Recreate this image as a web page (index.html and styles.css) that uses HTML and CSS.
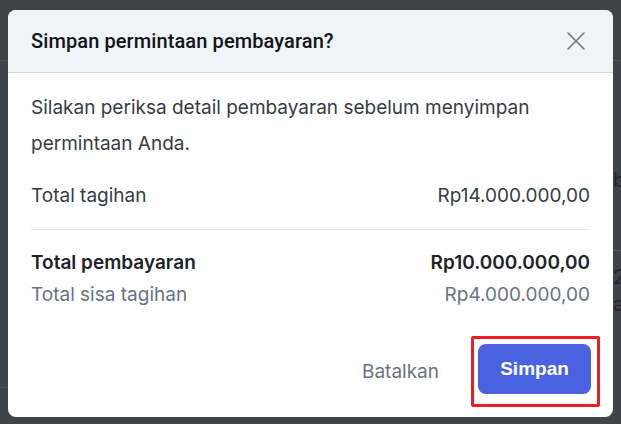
FILE: index.html
```html
<!DOCTYPE html>
<html lang="id">
<head>
<meta charset="utf-8">
<title>Simpan permintaan pembayaran</title>
<link rel="stylesheet" href="styles.css">
</head>
<body>
<div class="backdrop" aria-hidden="true">
  <div class="bg-line bg-line-1"></div>
  <div class="bg-line bg-line-2"></div>
  <div class="bg-line bg-line-3"></div>
  <div class="bg-glyph bg-b"></div>
  <div class="bg-glyph bg-2"></div>
  <div class="bg-glyph bg-a"></div>
</div>
<div class="dialog">
  <div class="dialog-header">
    <h2 class="dialog-title">Simpan permintaan pembayaran?</h2>
    <button class="close-btn" aria-label="Tutup">
      <svg width="18" height="18" viewBox="0 0 18 18" fill="none" stroke="#6b7280" stroke-width="1.6" stroke-linecap="round">
        <path d="M1 1L17 17M17 1L1 17"/>
      </svg>
    </button>
  </div>
  <div class="dialog-body">
    <p class="intro">Silakan periksa detail pembayaran sebelum menyimpan permintaan Anda.</p>
    <div class="row row-bill">
      <span>Total tagihan</span>
      <span>Rp14.000.000,00</span>
    </div>
    <div class="divider"></div>
    <div class="row row-strong">
      <span>Total pembayaran</span>
      <span>Rp10.000.000,00</span>
    </div>
    <div class="row row-muted">
      <span>Total sisa tagihan</span>
      <span>Rp4.000.000,00</span>
    </div>
  </div>
  <div class="dialog-footer">
    <button class="btn-cancel">Batalkan</button>
    <div class="highlight">
      <button class="btn-save">Simpan</button>
    </div>
  </div>
</div>
</body>
</html>
```

FILE: styles.css
```css
html, body {
  margin: 0;
  padding: 0;
}
body {
  background: #40434a;
  width: 621px;
  height: 424px;
  overflow: hidden;
  font-family: Inter, "Noto Sans", sans-serif;
}
.backdrop {
  position: absolute;
  inset: 0;
  pointer-events: none;
}
.bg-line {
  position: absolute;
  height: 1px;
  background: #53565d;
}
.bg-line-1 { left: 0; width: 621px; top: 60px; }
.bg-line-2 { left: 612px; width: 9px; top: 250px; }
.bg-line-3 { left: 0; width: 9px; top: 387px; }
.bg-glyph {
  position: absolute;
  left: 613px;
  color: #23252a;
  font-size: 20px;
  line-height: 20px;
}
.bg-b { top: 170px; }
.bg-b::before { content: "b"; }
.bg-2 { top: 267px; }
.bg-2::before { content: "2"; }
.bg-a { top: 294px; }
.bg-a::before { content: "a"; }

.dialog {
  position: relative;
  margin: 10px 0 0 8px;
  width: 605px;
  height: 407px;
  background: #ffffff;
  border-radius: 8px;
  overflow: hidden;
  display: flex;
  flex-direction: column;
}
.dialog-header {
  height: 62px;
  background: #f0f3f8;
  border-bottom: 1px solid #cfd6e0;
  display: flex;
  align-items: center;
  justify-content: space-between;
  padding: 0 28px 0 23px;
  box-sizing: content-box;
}
.dialog-title {
  margin: 0;
  font-family: Roboto, "Liberation Sans", sans-serif;
  font-weight: 500;
  font-size: 20px;
  letter-spacing: 0.1px;
  color: #111318;
}
.close-btn {
  border: 0;
  background: none;
  padding: 0;
  width: 18px;
  height: 18px;
  display: flex;
}
.dialog-body {
  padding: 17px 23px 0 23px;
  color: #374151;
}
.intro {
  margin: 0;
  font-size: 19px;
  line-height: 36px;
  color: #363c45;
}
.row {
  display: flex;
  justify-content: space-between;
  font-size: 19px;
  line-height: 28px;
}
.row-bill {
  margin-top: 20px;
  color: #363c45;
}
.divider {
  height: 1px;
  background: #e4e7eb;
  margin: 19px 0 19px;
}
.row-strong {
  font-weight: 600;
  color: #1f2329;
}
.row-muted {
  margin-top: 4px;
  color: #6b7280;
}
.dialog-footer {
  margin-top: auto;
  display: flex;
  align-items: center;
  justify-content: flex-end;
  padding: 0 13px 10px 0;
  gap: 32px;
}
.btn-cancel {
  border: 0;
  background: none;
  padding: 0;
  font-family: Inter, "Noto Sans", sans-serif;
  font-size: 19px;
  color: #6b7280;
}
.highlight {
  border: 3px solid #ec1c24;
  padding: 5px 6px 10px 4px;
  border-radius: 2px;
}
.btn-save {
  display: block;
  width: 113px;
  height: 50px;
  border: 0;
  border-radius: 8px;
  background: #4a62df;
  color: #ffffff;
  font-family: "Liberation Sans", Arial, sans-serif;
  font-weight: 700;
  font-size: 19px;
}
```
